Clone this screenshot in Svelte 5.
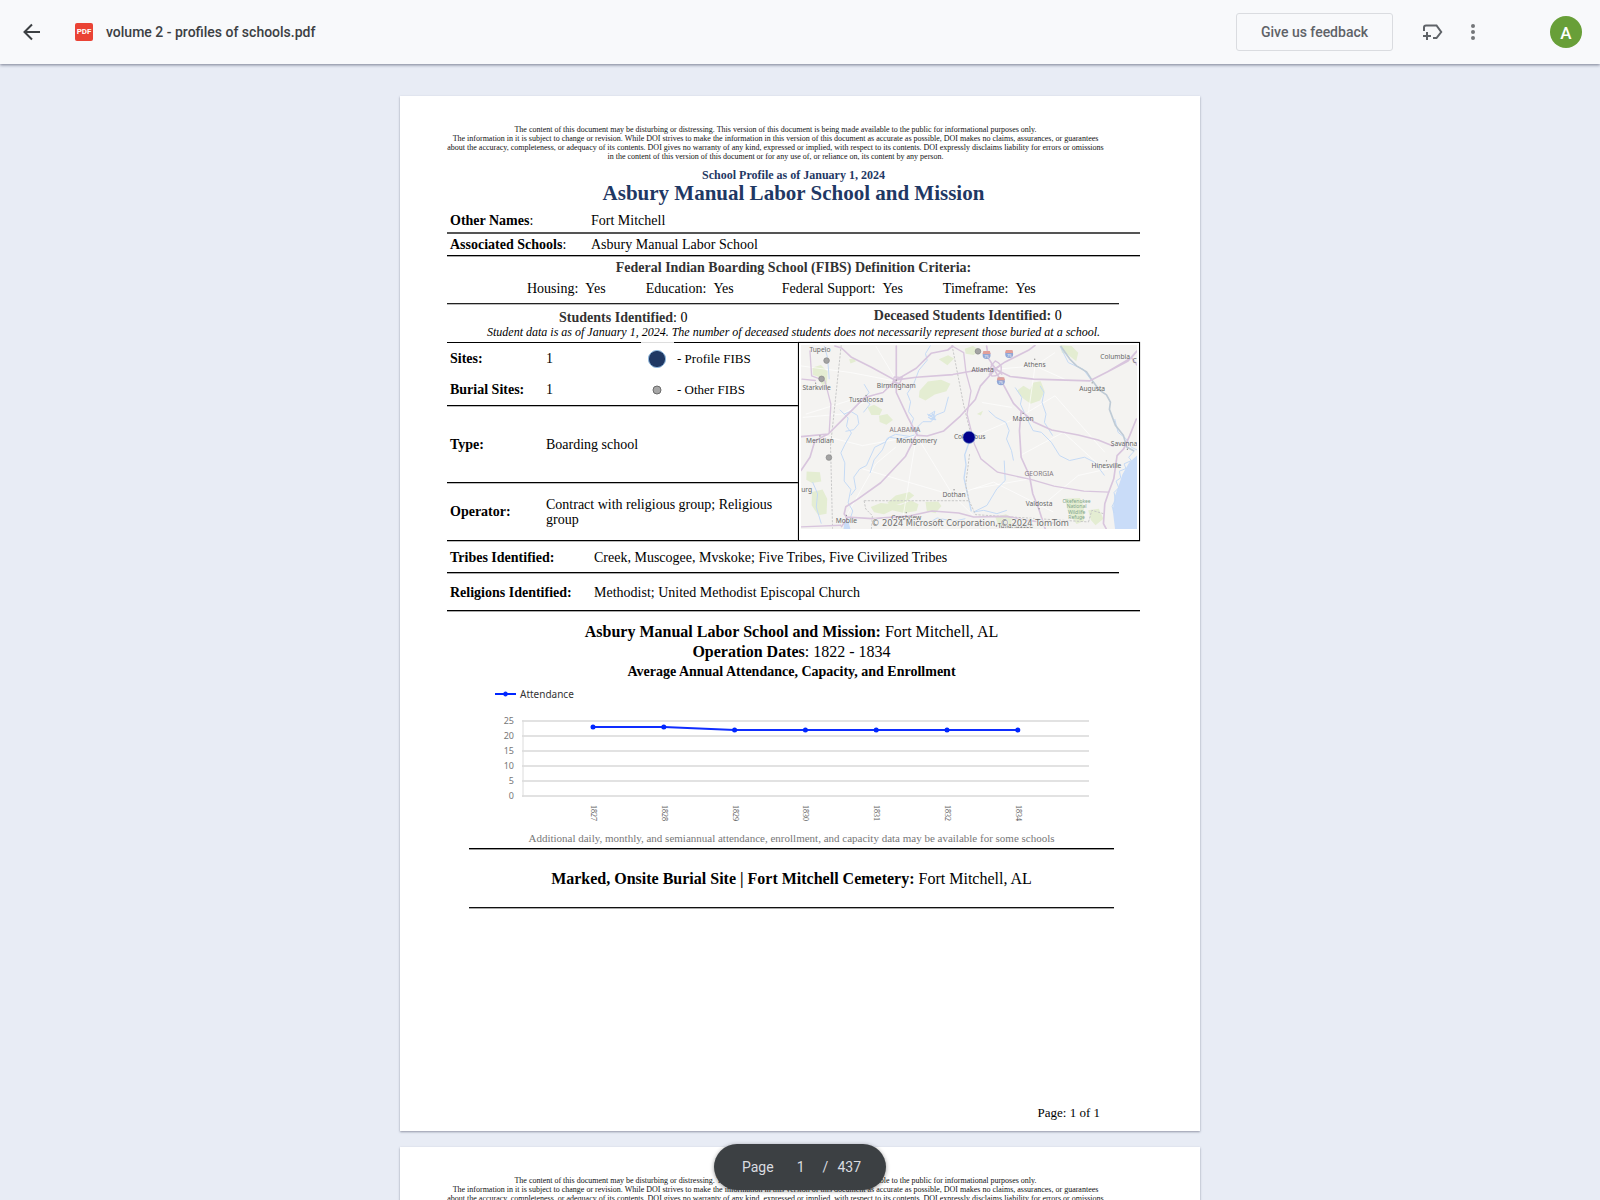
<script>
  const criteria = [
    ['Housing:', 'Yes'],
    ['Education:', 'Yes'],
    ['Federal Support:', 'Yes'],
    ['Timeframe:', 'Yes']
  ];

  const attendance = [
    { year: 1827, value: 23 },
    { year: 1828, value: 23 },
    { year: 1829, value: 22 },
    { year: 1830, value: 22 },
    { year: 1831, value: 22 },
    { year: 1832, value: 22 },
    { year: 1834, value: 22 }
  ];
  const ticks = [25, 20, 15, 10, 5, 0];
  const xAt = (i) => 124 + i * 70.8;
  const yAt = (v) => 112 - v * 3;
  const line = attendance.map((d, i) => `${xAt(i)},${yAt(d.value)}`).join(' ');

  const places = [
    ['Tupelo', 72, 48], ['Starkville', 62, 163], ['Birmingham', 302, 157], ['Tuscaloosa', 211, 200],
    ['Meridian', 72, 323], ['Montgomery', 363, 321], ['Atlanta', 562, 108], ['Athens', 719, 93],
    ['Augusta', 892, 166], ['Macon', 684, 256], ['Columbus', 523, 309], ['Savanna', 988, 332],
    ['Hinesville', 935, 398], ['Dothan', 476, 486], ['Valdosta', 732, 512], ['Mobile', 152, 564],
    ['Crestview', 332, 553], ['Tallahassee', 661, 577], ['Columbia', 961, 68], ['urg', 32, 471], ['C', 1020, 80]
  ];
  const otherSites = [[92, 74], [77, 129], [548, 46], [99, 366]];
  const shields = [[574, 57], [642, 54], [617, 136]];
</script>

{#snippet disclaimer()}
  <p class="disclaimer">
    <span>The content of this document may be disturbing or distressing. This version of this document is being made available to the public for informational purposes only.</span>
    <span>The information in it is subject to change or revision. While DOI strives to make the information in this version of this document as accurate as possible, DOI makes no claims, assurances, or guarantees</span>
    <span>about the accuracy, completeness, or adequacy of its contents. DOI gives no warranty of any kind, expressed or implied, with respect to its contents. DOI expressly disclaims liability for errors or omissions</span>
    <span>in the content of this version of this document or for any use of, or reliance on, its content by any person.</span>
  </p>
{/snippet}

<div class="viewer">
  <header class="bar">
    <button class="icon back" aria-label="Back">
      <svg viewBox="0 0 24 24" width="24" height="24"><path d="M20 12H5.5M12 4.5L4.500 12l7.500 7.500" fill="none" stroke="#3c4043" stroke-width="2" /></svg>
    </button>
    <span class="badge" aria-hidden="true">PDF</span>
    <h1 class="filename">volume 2 - profiles of schools.pdf</h1>
    <button class="feedback">Give us feedback</button>
    <button class="icon shortcut" aria-label="Add shortcut">
      <svg viewBox="0 0 24 24" width="24" height="24" fill="none" stroke="#5f6368" stroke-width="2">
        <path d="M4 11V7.500q0-2 2-2h10.500l4.700 6.500-4.700 6H13" />
        <path d="M7 12v8M3 16h8" />
      </svg>
    </button>
    <button class="icon more" aria-label="More actions">
      <svg viewBox="0 0 24 24" width="24" height="24" fill="#747679"><circle cx="12" cy="6" r="2" /><circle cx="12" cy="12" r="2" /><circle cx="12" cy="18" r="2" /></svg>
    </button>
    <button class="avatar" aria-label="Account">A</button>
  </header>

  <main class="scroll">
    <article class="page">
      {@render disclaimer()}
      <p class="asof">School Profile as of January 1, 2024</p>
      <h2 class="title">Asbury Manual Labor School and Mission</h2>

      <dl class="names">
        <div class="name-row first"><dt><b>Other Names</b>:</dt><dd>Fort Mitchell</dd></div>
        <div class="name-row"><dt><b>Associated Schools</b>:</dt><dd>Asbury Manual Labor School</dd></div>
      </dl>

      <section class="criteria">
        <h3>Federal Indian Boarding School (FIBS) Definition Criteria:</h3>
        <dl>
          {#each criteria as [label, value]}
            <div><dt>{label}</dt><dd>{value}</dd></div>
          {/each}
        </dl>
      </section>

      <div class="students">
        <p><b>Students Identified</b>: 0</p>
        <p><b>Deceased Students Identified:</b> 0</p>
      </div>
      <p class="note">Student data is as of January 1, 2024. The number of deceased students does not necessarily represent those buried at a school.</p>

      <div class="facts">
        <table>
          <tbody>
            <tr class="top">
              <th scope="row">Sites:</th>
              <td class="count">1</td>
              <td class="key"><svg viewBox="0 0 20 20" width="20" height="20"><circle cx="10" cy="10" r="8.600" fill="#1f3864" stroke="#8fb8de" stroke-width="1" /></svg></td>
              <td class="key-text">- Profile FIBS</td>
            </tr>
            <tr class="burial">
              <th scope="row">Burial Sites:</th>
              <td>1</td>
              <td class="key"><svg viewBox="0 0 20 20" width="20" height="20"><circle cx="10" cy="10" r="4" fill="#a6a6a6" stroke="#6b6b6b" stroke-width="1" /></svg></td>
              <td class="key-text">- Other FIBS</td>
            </tr>
            <tr class="type"><th scope="row">Type:</th><td colspan="3">Boarding school</td></tr>
            <tr class="operator"><th scope="row">Operator:</th><td colspan="3">Contract with religious group; Religious group</td></tr>
          </tbody>
        </table>

        <div class="map">
          <svg viewBox="15 27 1012 555" role="img" aria-label="Map of school sites">
            <rect x="15" y="27" width="1012" height="555" fill="#f4f3f1" />
            <g fill="#e4edd2">
              <path d="M50 95l25-8 20 20-2 38-15 2-12-25-15-5zM160 70l16-3 4 10-16 6zM215 215l20-8 25 14-8 17-25 0zM250 240l25-5 17 18-20 14-20-8zM372 165l25-28 40-5 28 12-12 22-35 10-28 18-20-10zM430 70l28-12 18 10-20 20zM508 38l25-8 20 12-18 15-24-4zM665 165l20-15 20 12 10-22 22-4 12 30-14 28-28 10-22-15zM795 28l35 2 20 20-6 26-25-20-18-6zM32 408l40 2 4 28-28 5-17-10zM48 470l32-8 14 28-2 45-25 5-20-30zM300 480l42-10 14 10-25 20-42 12-14-10zM225 515l30-12 60 6 32-14 22 12-6 20-38 6-35-8-25 12-30-6zM390 500l38-2 10 14-18 22-26-6zM810 490l45-2 12 25 0 45-22 8-25-35zM880 525l32-5 14 30-24 20-14-16zM600 545l32-8 22 12-8 20-35 4zM545 235l18-10-6 14z" />
            </g>
            <path d="M1027 360l-24 22-20 35-12 36-12 32-5 40 7 57h66z" fill="#c9dcf8" />
            <path d="M143 582l3-28 12 6 6 22z" fill="#c9dcf8" />
            <g fill="none" stroke="#fff" stroke-width="2">
              <path d="M15 90l150 20 130 25M30 235l160-50M300 145l-160 90-120 10M365 300L200 330 80 300M363 300l110 180 60 60M363 300l-40 240M475 480l120-40 180 90M475 480L200 400M530 305l150-65M680 240l100-60 150 170M720 90l-20 140M600 100l120-10 100 45M675 360l130-70 120 110M705 430l-170 30M730 520l120-100 90-20M560 200l90 15M150 545l90-160 60-50M780 50l-60 40M240 30l60 100" />
            </g>
            <g fill="none" stroke="#c5daf5" stroke-width="3" stroke-linejoin="round">
              <path d="M405 28l-15 25 5 20-25 30-15 40-20 30 10 25-6 30 15 20-8 25 20 25" />
              <path d="M132 222l25 25-5 25 15 20-20 35-12 25 12 30-2 55 20 25-8 40 14 25-12 35" />
              <path d="M145 235l20-8 20 12 4 25-15 18-25 5M205 145l15 25-15 20 18 15-20 25M165 480l15-20-6-35 18-25 20-10 25-55 30-15 15-15 35 5 40-12" />
              <path d="M340 302l-40-6-25 12-15 35-25 30-12 40M366 300l-4-22 20-20 25 0 15-20 25-10 12-45M395 235l25 15-20-12 18-12-5 25" />
              <path d="M398 238l10 4 4-8 6 10-12 6 16 2M398 244l12 8" stroke-width="4" />
              <path d="M522 318l-14 40 4 30-6 40 10 45 12 55" stroke-width="4" />
              <path d="M660 155l20 30-4 20 20 45 18 35 25 5 30 30 25 40 30 15 45-10 30 15 30 40" />
              <path d="M735 150l12 20-6 30 12 35-5 25 25 40M580 225l22 20 30 15 10 25-8 25 15 35 6 30M627 375l3 60-25 25-30 50-40 20M85 30l10 35 5 65M50 440l15 35-4 40 15 50M795 30l25 50 45 20 28 38" />
              <path d="M535 530l30-5 40 10 30-10M405 560l20-12 50 10 35-8M960 250l10 40 25 20 15 25 17 8" />
              <path d="M1020 345l-18 20 8 10-22 10 6 14-20 8 4 20-14 10 8 20-14 14 4 24-10 18 6 20" />
            </g>
            <path d="M797 30l28 40 20 20 30 18 20 30 18 24 22 15 12 22-3 22 18 48 24 30 10 35 22 12" fill="none" stroke="#bfcbd6" stroke-width="5" />
            <g fill="none" stroke="#c8c8c8" stroke-width="3" stroke-dasharray="7 4">
              <path d="M136 28L104 330l6 250M470 28l35 180 21 85M205 496h316l-10-48 12-95M205 496l5 25 20 20-3 40M521 496l20 42 340 22M881 560l10-35 35 10" />
            </g>
            <g fill="none" stroke="#d8c5dd" stroke-width="5" stroke-linejoin="round" stroke-linecap="round">
              <path d="M117 30l20 6 30 28 60 30 75 41M302 30v105M302 132l60-35 45-45 50-10 15-12M302 132l60-8 110-8 55-10 65-8" />
              <path d="M302 132l-40 38-55 15-60 60-50 50-82 8M302 140v30l35 75 28 54M97 295l-40 20-15 50-27 40" />
              <path d="M365 299l30 2 50-15 50-45 45-50 15-40 40-45M360 302l-30 60-75 80-70 50-35 22-5 22 10 12-18 26M150 545l80 5 110-8 70-15 80 6 45 12 100-2 60 12 80 8" />
              <path d="M595 98l25 40 35 65 20 20 40 35 55 25 80 15 60 15 45 18M678 225l-5 60 5 80 25 55 10 55 18 45 20 62" />
              <path d="M600 100l45 22 70 8 170 5 55-28 60-32 25-28M940 107l70-42 17-20M1010 65l17 22M600 98l-20-30-6-38M600 98l30-20 70-35 20-15" />
              <path d="M1025 250l-20 50-18 40-20 20-10 70-15 40-12 35-4 60 8 15" />
              <path d="M470 30l35 20 7 60 15 55-12 70 14 55 8 35 20 45 50 40 100 22 70 20 90 15 75 3M15 575l120-5M42 45l5 75 40 15 18 70-5 85M18 130l40 4M320 125l-8 18-20-4 4-16z" stroke-width="4" />
              <path d="M600 75q22 10 18 28t-28 18q-15-22 10-46zM582 115l30-24M588 85l32 30" stroke-width="4" />
            </g>
            {#each shields as [x, y]}
              <g><circle cx={x} cy={y} r="12" fill="#91a6d6" /><path d={`M${x - 12} ${y - 3}l2-9h20l2 9z`} fill="#e2a09a" /><text class="route" {x} y={y + 8}>75</text></g>
            {/each}
            <g fill="#888">
              {#each [[59, 142], [302, 133], [211, 179], [72, 301], [719, 70], [892, 141], [684, 233], [935, 376], [476, 463], [732, 520], [152, 540], [332, 532], [998, 341]] as [x, y]}
                <circle cx={x} cy={y} r="2" />
              {/each}
            </g>
            {#each places as [name, x, y]}
              <text class="place" {x} {y}>{name}</text>
            {/each}
            <text class="state" x="328" y="290">ALABAMA</text>
            <text class="state" x="732" y="423">GEORGIA</text>
            <text class="park"><tspan x="845" y="503">Okefenokee</tspan><tspan x="845" y="519">National</tspan><tspan x="845" y="535">Wildlife</tspan><tspan x="845" y="551">Refuge</tspan></text>
            {#each otherSites as [x, y]}
              <circle cx={x} cy={y} r="8.500" fill="#a3a3a3" stroke="#858585" stroke-width="2" />
            {/each}
            <circle cx="521" cy="305" r="18.500" fill="#00008b" stroke="#7b9fd0" stroke-width="2" />
            <text class="credit" x="524" y="571">© 2024 Microsoft Corporation, © 2024 TomTom</text>
          </svg>
        </div>
      </div>

      <dl class="groups">
        <div class="tribes"><dt>Tribes Identified:</dt><dd>Creek, Muscogee, Mvskoke; Five Tribes, Five Civilized Tribes</dd></div>
        <div class="religions"><dt>Religions Identified:</dt><dd>Methodist; United Methodist Episcopal Church</dd></div>
      </dl>

      <section class="site">
        <h3><b>Asbury Manual Labor School and Mission:</b> Fort Mitchell, AL</h3>
        <p class="dates"><b>Operation Dates</b>: 1822 - 1834</p>
        <h4>Average Annual Attendance, Capacity, and Enrollment</h4>
        <svg class="chart" viewBox="0 0 645 145" role="img" aria-label="Attendance by year">
          <g stroke="#0026ff" fill="#0026ff"><path d="M26 10h21" stroke-width="2" /><circle cx="36.500" cy="10" r="2" /></g>
          <text class="legend" x="51" y="14">Attendance</text>
          {#each ticks as t}
            <path d={`M53 ${yAt(t)}H620`} stroke="#e2e2e2" stroke-width="2" />
            <text class="tick" x="45" y={yAt(t) + 3}>{t}</text>
          {/each}
          <path d="M54 36v77" stroke="#dcdcdc" stroke-width="1" />
          <polyline points={line} fill="none" stroke="#0f2dff" stroke-width="2" />
          {#each attendance as d, i}
            <circle cx={xAt(i)} cy={yAt(d.value)} r="2.500" fill="#0026ff" />
            <text class="year" transform={`translate(${xAt(i) - 2} 121) rotate(90)`}>{d.year}</text>
          {/each}
        </svg>
        <p class="extra">Additional daily, monthly, and semiannual attendance, enrollment, and capacity data may be available for some schools</p>
        <h3 class="cemetery"><b>Marked, Onsite Burial Site | Fort Mitchell Cemetery:</b> Fort Mitchell, AL</h3>
      </section>

      <footer class="folio">Page: 1 of 1</footer>
    </article>

    <article class="page">
      {@render disclaimer()}
    </article>
  </main>

  <div class="pager">
    <label for="page-number">Page</label>
    <input id="page-number" value="1" />
    <span class="slash">/</span>
    <span>437</span>
  </div>
</div>

<style>
  :global(body) { margin: 0; }
  .viewer, .viewer * { box-sizing: border-box; }
  .viewer { height: 100vh; display: flex; flex-direction: column; background: #e8ecf5; position: relative; }
  p, h1, h2, h3, h4, dl, dd { margin: 0; }
  button { font: inherit; border: 0; background: none; padding: 0; cursor: pointer; }

  .bar {
    flex: none; height: 64px; display: flex; align-items: center; padding: 0 18px 0 20px;
    background: #f8f9fb; box-shadow: 0 1px 3px rgba(60, 64, 90, .65);
    font-family: Roboto, sans-serif; z-index: 1;
  }
  .icon { width: 24px; height: 24px; }
  .icon svg { display: block; }
  .badge {
    width: 18px; height: 18px; margin-left: 31px; border-radius: 2px; background: #ea4335;
    color: #fff; font-size: 8px; font-weight: 700; line-height: 18px; text-align: center;
  }
  .filename { margin-left: 13px; font-size: 14px; font-weight: 500; color: #3c4043; line-height: 20px; }
  .feedback {
    margin-left: auto; height: 38px; width: 157px; border: 1px solid #dadce0; border-radius: 3px;
    font-size: 14px; font-weight: 500; color: #5f6368;
  }
  .shortcut { margin-left: 27px; }
  .more { margin-left: 17px; }
  .avatar {
    margin-left: 65px; width: 32px; height: 32px; border-radius: 50%;
    background: #689f38; color: #fff; font-size: 17px; font-weight: 500; padding-top: 1px;
  }

  .scroll {
    flex: 1; min-height: 0; overflow: auto; scrollbar-width: none; padding: 32px 16px 16px;
    display: flex; flex-direction: column; align-items: center; gap: 16px;
  }
  .page {
    flex: none; display: flex; flex-direction: column; width: 100%; max-width: 800px; min-height: 1035px;
    padding: 29px 60px 10px 47px; background: #fff; box-shadow: 0 1px 2px rgba(60, 64, 90, .5);
    font-family: "Liberation Serif", serif; font-size: 14px; line-height: 16px; color: #000;
  }
  .disclaimer { padding-right: 36px; font-size: 8px; line-height: 9px; text-align: center; color: #111; }
  .disclaimer span { display: block; }
  .asof { margin-top: 7px; font-size: 12px; line-height: 14px; font-weight: bold; text-align: center; color: #1f3864; }
  .title { font-size: 21px; line-height: 22px; text-align: center; color: #1f3864; }

  .name-row { display: flex; padding: 3px 3px 2px; border-bottom: 1px solid #000; box-shadow: 0 1px #aaa; }
  .name-row.first { padding: 9px 3px 3px; border-bottom: 2px solid #555; box-shadow: none; }
  .name-row dt { width: 141px; }

  .criteria { margin-right: 21px; border-bottom: 1px solid #222; box-shadow: 0 1px #bbb; }
  .criteria h3 { margin: 4px -21px 0 0; font-size: 14px; line-height: 16px; text-align: center; color: #333; }
  .criteria dl { display: flex; gap: 40px; padding: 5px 0 6px 80px; }
  .criteria dl div { display: flex; gap: 7px; }
  .criteria dl div:nth-child(3) { margin-left: 8px; }

  .students { display: grid; grid-template-columns: 1fr 1fr; padding: 4px 0 0 4px; text-align: center; }
  .students p:first-child { padding-top: 2px; }
  .students b { color: #333; }
  .note { font-size: 12px; line-height: 14px; font-style: italic; text-align: center; padding: 0 0 3px; margin-top: -1px; }

  .facts { display: grid; grid-template-columns: 351px 1fr; }
  table { border-collapse: separate; border-spacing: 0; width: 100%; }
  th, td { padding: 0 3px; text-align: left; vertical-align: middle; border-bottom: 1px solid #000; box-shadow: 0 1px #bbb; line-height: 15px; }
  th { width: 96px; }
  .top th, .top td { border-bottom: 0; border-top: 1px solid #000; height: 32px; box-shadow: none; }
  .top .key { border-top-color: #ddd; }
  .count { width: 98px; }
  .burial th, .burial td { height: 32px; }
  td.key { width: 33px; padding: 0 2px 0 0; }
  .key svg { display: block; margin: 0 auto; }
  .key-text { font-size: 13px; }
  .type th, .type td { height: 77px; }
  .operator th, .operator td { height: 58px; }
  .map { border: 1px solid #000; padding: 2px 2px 0; box-shadow: 0 1px #bbb, 0 0 1px #777; }
  .map svg { display: block; width: 100%; }
  .map text { font-family: "Noto Sans", sans-serif; text-anchor: middle; }
  .map .place { font-size: 20px; fill: #666; }
  .map .state { font-size: 20px; fill: #857a80; }
  .map .park { font-size: 15px; fill: #7fa58a; }
  .map .route { font-size: 12px; fill: #fff; }
  .map .credit { font-family: "DejaVu Sans", sans-serif; font-size: 25px; fill: #707070; stroke: #f4f3f1; stroke-width: 5px; paint-order: stroke; }

  .groups div { display: flex; padding-left: 3px; border-bottom: 1px solid #000; box-shadow: 0 1px #aaa; }
  .groups dt { width: 144px; font-weight: bold; }
  .groups .tribes { margin-right: 21px; padding-top: 9px; padding-bottom: 6px; }
  .groups .religions { padding-top: 12px; padding-bottom: 9px; }

  .site { margin: 11px 26px 0 22px; text-align: center; }
  .site h3, .dates { font-size: 16px; line-height: 20px; font-weight: normal; }
  .site h4 { font-size: 14px; line-height: 20px; }
  .chart { display: block; width: 100%; margin-top: 2px; }
  .chart text { font-family: "Noto Sans", sans-serif; }
  .chart .legend { font-size: 10px; fill: #333; }
  .chart .tick { font-size: 9px; fill: #777; text-anchor: end; }
  .chart .year { font-family: "Liberation Serif", serif; font-size: 8px; fill: #555; }
  .extra { font-size: 11px; line-height: 14px; padding: 2px 0 3px; color: #777; border-bottom: 1px solid #000; box-shadow: 0 1px #999; }
  .site .cemetery { padding: 20px 0 18px; border-bottom: 1px solid #111; box-shadow: 0 1px #aaa; }
  .folio { margin: auto 40px 0 0; align-self: flex-end; font-size: 13px; line-height: 16px; }

  .pager {
    position: absolute; left: 50%; bottom: 10px; transform: translateX(-50%); z-index: 2;
    height: 46px; width: 172px; padding: 0 25px 0 28px; display: flex; align-items: center;
    border-radius: 23px; background: #3c4043; color: #dadce0; box-shadow: 0 1px 4px rgba(0, 0, 0, .4);
    font-family: Roboto, sans-serif; font-size: 14px;
  }
  .pager input { width: 30px; margin: 0 5px 0 12px; padding: 0; border: 0; background: none; color: inherit; font: inherit; text-align: center; }
  .slash { margin: 0 9px 0 auto; }
</style>
